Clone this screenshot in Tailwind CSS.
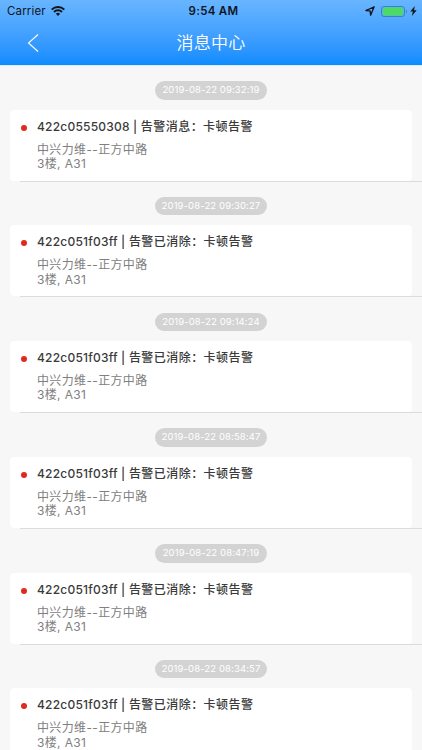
<!DOCTYPE html>
<html lang="zh-CN">
<head>
  <meta charset="UTF-8">
  <meta name="viewport" content="width=device-width, initial-scale=1.0">
  <title>消息中心</title>
  <script src="https://cdn.jsdelivr.net/npm/@tailwindcss/browser@4"></script>
</head>
<body class="h-screen overflow-hidden bg-[#f7f7f7] font-['Inter','Noto_Sans_CJK_SC',sans-serif]">
  <!-- Header -->
  <header class="h-[65px] bg-linear-to-b from-[#68b5ff] to-[#0a8cff]">
    <!-- Status bar -->
    <div class="grid h-[22px] grid-cols-3 items-center pl-[7px] pr-[5px] text-[11.5px] leading-none text-[#10151c]">
      <div class="flex items-center gap-[5px] pt-px">
        <span class="tracking-[0.15px]">Carrier</span>
        <svg class="mb-px h-[10px] w-[14px]" viewBox="0 0 14 10" fill="none" stroke="currentColor" stroke-width="2">
          <path d="M0.7 3.6a9 9 0 0 1 12.6 0" />
          <path d="M3 6a5.7 5.7 0 0 1 8 0" />
          <path d="M7 10L4.9 7.8a3 3 0 0 1 4.2 0z" fill="currentColor" stroke="none" />
        </svg>
      </div>
      <div class="pl-[3px] pt-px text-center font-semibold tracking-[0.3px]">9:54 AM</div>
      <div class="flex items-center justify-end">
        <svg class="mr-[6px] h-[10px] w-[10px]" viewBox="0 0 10 10" fill="none" stroke="currentColor" stroke-width="1.3" stroke-linejoin="round">
          <path d="M9.2 0.8L0.9 4.5l4.2 0.4l0.5 4.3z" />
        </svg>
        <svg class="mr-[2px] h-[11px] w-[27px]" viewBox="0 0 27 11">
          <rect x="0.5" y="0.5" width="23" height="10" rx="2.6" fill="none" stroke="#3f7fbe" />
          <rect x="2" y="1.5" width="20" height="8" rx="1.2" fill="#4cd964" />
          <path d="M25 3.8v3.4c1.3-.5 1.3-2.9 0-3.4z" fill="#3f7fbe" />
        </svg>
        <svg class="h-[10px] w-[7px]" viewBox="0 0 7 10" fill="currentColor">
          <path d="M4.8 0L0.3 5.6h2.6L1.9 10L6.7 4.2H4z" />
        </svg>
      </div>
    </div>
    <!-- Nav bar -->
    <div class="grid h-[42px] grid-cols-[1fr_auto_1fr] items-center text-white">
      <svg class="ml-[27px] h-[18px] w-[12px]" viewBox="0 0 12 18" fill="none" stroke="currentColor" stroke-width="1.1">
        <path d="M11 0.5L1.5 9L11 17.5" />
      </svg>
      <h1 class="text-[17px] font-[350] leading-none tracking-[0.3px]">消息中心</h1>
    </div>
  </header>

  <!-- Message list -->
  <main class="border-t border-[#d9edff] text-[12px] tracking-[0.35px]">
    <section class="flex h-[115.75px] flex-col items-center px-[10px] pt-[15px]">
      <time class="h-[18.5px] w-[112px] shrink-0 rounded-full bg-[#d3d3d3] text-center text-[9.5px] leading-[18.5px] tracking-[0.12px] text-white">2019-08-22 09:32:19</time>
      <div class="mt-[10px] flex h-[71px] w-full shrink-0 rounded-[4px] bg-white pl-[10.5px] pt-[9px]">
        <i class="mt-[6px] h-[6px] w-[6px] rounded-full bg-[#e02a20]"></i>
        <div class="ml-[10.5px]">
          <h2 class="font-medium leading-[16px] tracking-[0.45px] text-[#3a3a3a]"><span class="tracking-[0.21px]">422c05550308 | </span>告警消息：卡顿告警</h2>
          <p class="mt-[8px] leading-[14.4px] text-[#808080]">中兴力维--正方中路<br>3楼, A31</p>
        </div>
      </div>
      <hr class="-mr-[10px] h-px w-[402px] shrink-0 self-end border-0 bg-[#dcdcdc]">
    </section>
    <section class="flex h-[115.75px] flex-col items-center px-[10px] pt-[15px]">
      <time class="h-[18.5px] w-[112px] shrink-0 rounded-full bg-[#d3d3d3] text-center text-[9.5px] leading-[18.5px] tracking-[0.12px] text-white">2019-08-22 09:30:27</time>
      <div class="mt-[10px] flex h-[71px] w-full shrink-0 rounded-[4px] bg-white pl-[10.5px] pt-[9px]">
        <i class="mt-[6px] h-[6px] w-[6px] rounded-full bg-[#e02a20]"></i>
        <div class="ml-[10.5px]">
          <h2 class="font-medium leading-[16px] tracking-[0.45px] text-[#3a3a3a]"><span class="tracking-[0.21px]">422c051f03ff | </span>告警已消除：卡顿告警</h2>
          <p class="mt-[8px] leading-[14.4px] text-[#808080]">中兴力维--正方中路<br>3楼, A31</p>
        </div>
      </div>
      <hr class="-mr-[10px] h-px w-[402px] shrink-0 self-end border-0 bg-[#dcdcdc]">
    </section>
    <section class="flex h-[115.75px] flex-col items-center px-[10px] pt-[15px]">
      <time class="h-[18.5px] w-[112px] shrink-0 rounded-full bg-[#d3d3d3] text-center text-[9.5px] leading-[18.5px] tracking-[0.12px] text-white">2019-08-22 09:14:24</time>
      <div class="mt-[10px] flex h-[71px] w-full shrink-0 rounded-[4px] bg-white pl-[10.5px] pt-[9px]">
        <i class="mt-[6px] h-[6px] w-[6px] rounded-full bg-[#e02a20]"></i>
        <div class="ml-[10.5px]">
          <h2 class="font-medium leading-[16px] tracking-[0.45px] text-[#3a3a3a]"><span class="tracking-[0.21px]">422c051f03ff | </span>告警已消除：卡顿告警</h2>
          <p class="mt-[8px] leading-[14.4px] text-[#808080]">中兴力维--正方中路<br>3楼, A31</p>
        </div>
      </div>
      <hr class="-mr-[10px] h-px w-[402px] shrink-0 self-end border-0 bg-[#dcdcdc]">
    </section>
    <section class="flex h-[115.75px] flex-col items-center px-[10px] pt-[15px]">
      <time class="h-[18.5px] w-[112px] shrink-0 rounded-full bg-[#d3d3d3] text-center text-[9.5px] leading-[18.5px] tracking-[0.12px] text-white">2019-08-22 08:58:47</time>
      <div class="mt-[10px] flex h-[71px] w-full shrink-0 rounded-[4px] bg-white pl-[10.5px] pt-[9px]">
        <i class="mt-[6px] h-[6px] w-[6px] rounded-full bg-[#e02a20]"></i>
        <div class="ml-[10.5px]">
          <h2 class="font-medium leading-[16px] tracking-[0.45px] text-[#3a3a3a]"><span class="tracking-[0.21px]">422c051f03ff | </span>告警已消除：卡顿告警</h2>
          <p class="mt-[8px] leading-[14.4px] text-[#808080]">中兴力维--正方中路<br>3楼, A31</p>
        </div>
      </div>
      <hr class="-mr-[10px] h-px w-[402px] shrink-0 self-end border-0 bg-[#dcdcdc]">
    </section>
    <section class="flex h-[115.75px] flex-col items-center px-[10px] pt-[15px]">
      <time class="h-[18.5px] w-[112px] shrink-0 rounded-full bg-[#d3d3d3] text-center text-[9.5px] leading-[18.5px] tracking-[0.12px] text-white">2019-08-22 08:47:19</time>
      <div class="mt-[10px] flex h-[71px] w-full shrink-0 rounded-[4px] bg-white pl-[10.5px] pt-[9px]">
        <i class="mt-[6px] h-[6px] w-[6px] rounded-full bg-[#e02a20]"></i>
        <div class="ml-[10.5px]">
          <h2 class="font-medium leading-[16px] tracking-[0.45px] text-[#3a3a3a]"><span class="tracking-[0.21px]">422c051f03ff | </span>告警已消除：卡顿告警</h2>
          <p class="mt-[8px] leading-[14.4px] text-[#808080]">中兴力维--正方中路<br>3楼, A31</p>
        </div>
      </div>
      <hr class="-mr-[10px] h-px w-[402px] shrink-0 self-end border-0 bg-[#dcdcdc]">
    </section>
    <section class="flex h-[115.75px] flex-col items-center px-[10px] pt-[15px]">
      <time class="h-[18.5px] w-[112px] shrink-0 rounded-full bg-[#d3d3d3] text-center text-[9.5px] leading-[18.5px] tracking-[0.12px] text-white">2019-08-22 08:34:57</time>
      <div class="mt-[10px] flex h-[71px] w-full shrink-0 rounded-[4px] bg-white pl-[10.5px] pt-[9px]">
        <i class="mt-[6px] h-[6px] w-[6px] rounded-full bg-[#e02a20]"></i>
        <div class="ml-[10.5px]">
          <h2 class="font-medium leading-[16px] tracking-[0.45px] text-[#3a3a3a]"><span class="tracking-[0.21px]">422c051f03ff | </span>告警已消除：卡顿告警</h2>
          <p class="mt-[8px] leading-[14.4px] text-[#808080]">中兴力维--正方中路<br>3楼, A31</p>
        </div>
      </div>
    </section>
  </main>
</body>
</html>
